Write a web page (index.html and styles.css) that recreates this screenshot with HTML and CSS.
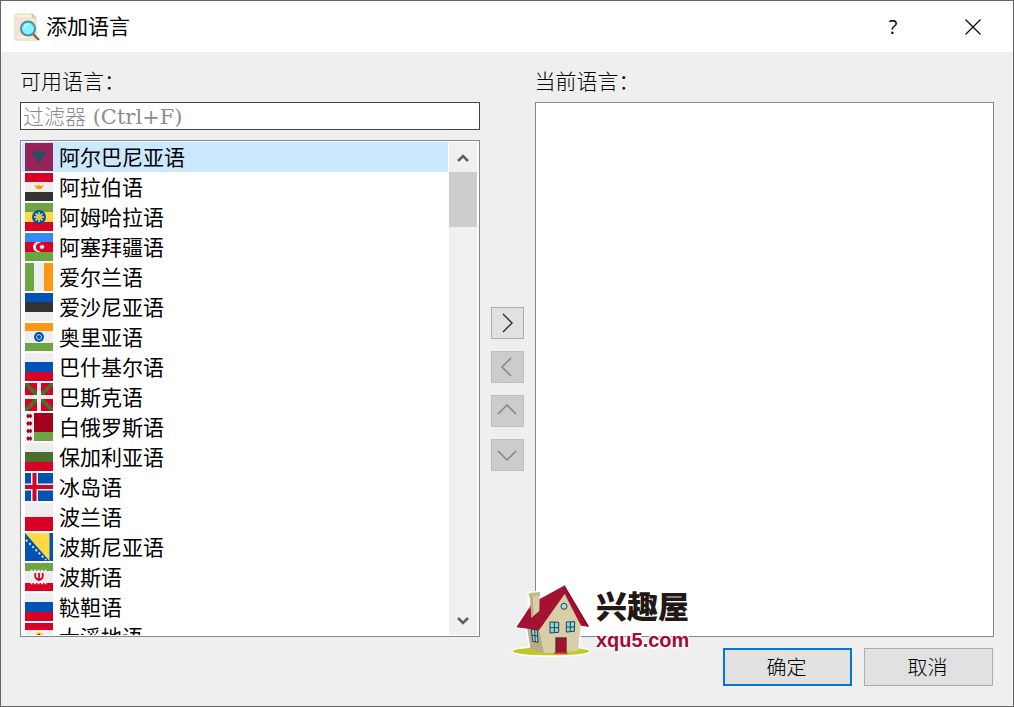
FILE: index.html
```html
<!DOCTYPE html>
<html lang="zh-CN">
<head>
    <meta charset="UTF-8">
    <meta name="viewport" content="width=device-width, initial-scale=1.0">
    <title>添加语言</title>
    <link rel="stylesheet" href="styles.css">
</head>
<body>
    <div class="dialog" role="dialog" aria-labelledby="dialog-title">
        <header class="titlebar">
            <svg class="app-icon" viewBox="0 0 26 28" aria-hidden="true">
                <path d="M3 0H18L23 5V26Q23 28 21 28H2Q0 28 0 26V3Q0 0 3 0Z" fill="#f0e4d3"/>
                <path d="M3 3H16M3 24H15" stroke="#f8f1e7" stroke-width="2"/>
                <path d="M18 0V5H23Z" fill="#d9c9b4"/>
                <path d="M18.500 20.500L25 27" stroke="#9a5c2c" stroke-width="2.400"/>
                <circle cx="14" cy="15.500" r="7" fill="#7ef4fb" stroke="#4d8ea6" stroke-width="2"/>
                <path d="M10 15Q11 11.500 14.500 11.500" stroke="#c4ffff" stroke-width="1.500" fill="none"/>
            </svg>
            <h1 class="title" id="dialog-title">添加语言</h1>
            <button class="caption-button" type="button" aria-label="帮助">?</button>
            <button class="caption-button" type="button" aria-label="关闭">
                <svg class="close-icon" viewBox="0 0 16 16" aria-hidden="true"><path d="M.5 .5L15.500 15.500M15.500 .5L.5 15.500"/></svg>
            </button>
        </header>

        <main class="content">
            <label class="label label-available" for="filter">可用语言：</label>
            <input class="filter" id="filter" type="text" placeholder="过滤器 (Ctrl+F)">

            <div class="available">
                <ul class="languages" role="listbox" aria-label="可用语言">
                    <li class="language selected" role="option" aria-selected="true">
                        <svg class="flag" viewBox="0 0 28 28"><path fill="#96245b" d="M0 0h28v28H0z"/><path fill="#2d4a63" d="M14 9l-1-2-2 1 1 2-5-2 1 4 2 3 2 0-1 2 1 2 1-1 1 4 1-4 1 1 1-2-1-2 2 0 2-3 1-4-5 2 1-2-2-1z"/></svg>
                        <span class="name">阿尔巴尼亚语</span>
                    </li>
                    <li class="language" role="option">
                        <svg class="flag" viewBox="0 0 28 28"><path fill="#eee" d="M0 0h28v28H0z"/><path fill="#d80027" d="M0 0h28v9H0z"/><path fill="#333" d="M0 19h28v9H0z"/><path fill="#ff9811" d="M9 12l4 1 1-2 1 2 4-1-2 3h-1l1 1h-6l1-1h-1z"/></svg>
                        <span class="name">阿拉伯语</span>
                    </li>
                    <li class="language" role="option">
                        <svg class="flag" viewBox="0 0 28 28"><path fill="#ffda44" d="M0 0h28v28H0z"/><path fill="#6da544" d="M0 0h28v9H0z"/><path fill="#d80027" d="M0 19h28v9H0z"/><circle cx="14" cy="14" r="7" fill="#0052b4"/><path stroke="#ffda44" stroke-width="1.500" d="M14 9v10M9 14h10M10.500 10.500l7 7M17.500 10.500l-7 7"/><circle cx="14" cy="14" r="3" fill="#d4c45a"/></svg>
                        <span class="name">阿姆哈拉语</span>
                    </li>
                    <li class="language" role="option">
                        <svg class="flag" viewBox="0 0 28 28"><path fill="#d80027" d="M0 0h28v28H0z"/><path fill="#338af3" d="M0 0h28v9H0z"/><path fill="#6da544" d="M0 19h28v9H0z"/><circle cx="13" cy="14" r="5" fill="#eee"/><circle cx="15" cy="14" r="4" fill="#d80027"/><path fill="#eee" d="M17 11.500l.7 1.100 1.300-.2-.2 1.100 1 .5-1 .5.2 1.100-1.300-.2-.7 1.100-.7-1.100-1.300.2.2-1.100-1-.5 1-.5-.2-1.100 1.300.2z"/></svg>
                        <span class="name">阿塞拜疆语</span>
                    </li>
                    <li class="language" role="option">
                        <svg class="flag" viewBox="0 0 28 28"><path fill="#eee" d="M0 0h28v28H0z"/><path fill="#6da544" d="M0 0h9v28H0z"/><path fill="#ff9811" d="M19 0h9v28h-9z"/></svg>
                        <span class="name">爱尔兰语</span>
                    </li>
                    <li class="language" role="option">
                        <svg class="flag" viewBox="0 0 28 28"><path fill="#eee" d="M0 0h28v28H0z"/><path fill="#0052b4" d="M0 0h28v9H0z"/><path fill="#333" d="M0 9h28v10H0z"/></svg>
                        <span class="name">爱沙尼亚语</span>
                    </li>
                    <li class="language" role="option">
                        <svg class="flag" viewBox="0 0 28 28"><path fill="#eee" d="M0 0h28v28H0z"/><path fill="#ff9811" d="M0 0h28v8H0z"/><path fill="#6da544" d="M0 20h28v8H0z"/><circle cx="14" cy="14" r="5" fill="#0052b4"/><circle cx="14" cy="14" r="2.500" fill="none" stroke="#b8cce8"/></svg>
                        <span class="name">奥里亚语</span>
                    </li>
                    <li class="language" role="option">
                        <svg class="flag" viewBox="0 0 28 28"><path fill="#eee" d="M0 0h28v28H0z"/><path fill="#0052b4" d="M0 9h28v10H0z"/><path fill="#d80027" d="M0 19h28v9H0z"/></svg>
                        <span class="name">巴什基尔语</span>
                    </li>
                    <li class="language" role="option">
                        <svg class="flag" viewBox="0 0 28 28"><path fill="#d80027" d="M0 0h28v28H0z"/><path stroke="#496e2d" stroke-width="4" d="M0 0l28 28M28 0L0 28"/><path stroke="#eee" stroke-width="4" d="M14 0v28M0 14h28"/></svg>
                        <span class="name">巴斯克语</span>
                    </li>
                    <li class="language" role="option">
                        <svg class="flag" viewBox="0 0 28 28"><path fill="#eee" d="M0 0h28v28H0z"/><path fill="#a2001d" d="M9 0h19v19H9z"/><path fill="#6da544" d="M9 19h19v9H9z"/><path fill="#a2001d" d="M3 .5l1.300 1.500L5.600.5l1.700 2.500-1.700 2.500-1.300-1.500L3 5.500 1.300 3zM3 8l1.300 1.500L5.600 8l1.700 2.500L5.600 13l-1.300-1.500L3 13l-1.700-2.500zM3 15.500L4.300 17l1.300-1.500L7.300 18l-1.700 2.500L4.300 19 3 20.500 1.300 18zM3 23l1.300 1.500L5.600 23l1.700 2.500L5.600 28l-1.300-1.500L3 28l-1.700-2.500z"/></svg>
                        <span class="name">白俄罗斯语</span>
                    </li>
                    <li class="language" role="option">
                        <svg class="flag" viewBox="0 0 28 28"><path fill="#eee" d="M0 0h28v28H0z"/><path fill="#496e2d" d="M0 9h28v10H0z"/><path fill="#d80027" d="M0 19h28v9H0z"/></svg>
                        <span class="name">保加利亚语</span>
                    </li>
                    <li class="language" role="option">
                        <svg class="flag" viewBox="0 0 28 28"><path fill="#0052b4" d="M0 0h28v28H0z"/><path stroke="#eee" stroke-width="7" d="M9.500 0v28M0 14h28"/><path stroke="#d80027" stroke-width="4" d="M9.500 0v28M0 14h28"/></svg>
                        <span class="name">冰岛语</span>
                    </li>
                    <li class="language" role="option">
                        <svg class="flag" viewBox="0 0 28 28"><path fill="#eee" d="M0 0h28v28H0z"/><path fill="#d80027" d="M0 14h28v14H0z"/></svg>
                        <span class="name">波兰语</span>
                    </li>
                    <li class="language" role="option">
                        <svg class="flag" viewBox="0 0 28 28"><path fill="#0052b4" d="M0 0h28v28H0z"/><path fill="#ffda44" d="M0 0h24.500v28z"/><path fill="#0052b4" d="M0 3l24 24.500V28H0z"/><path stroke="#eee" stroke-width="2" stroke-dasharray="2 2.500" d="M1 7l20 20"/></svg>
                        <span class="name">波斯尼亚语</span>
                    </li>
                    <li class="language" role="option">
                        <svg class="flag" viewBox="0 0 28 28"><path fill="#eee" d="M0 0h28v28H0z"/><path fill="#6da544" d="M0 0h28v8H0z"/><path fill="#d80027" d="M0 20h28v8H0z"/><path stroke="#eee" stroke-width="1.500" stroke-dasharray="2 1.500" d="M5.500 7.500h17.500M5.500 20.500h17.500"/><path fill="none" stroke="#d80027" stroke-width="1.800" d="M10.500 10q-1.500 6 3.500 7 5-1 3.500-7M14 10v8"/></svg>
                        <span class="name">波斯语</span>
                    </li>
                    <li class="language" role="option">
                        <svg class="flag" viewBox="0 0 28 28"><path fill="#eee" d="M0 0h28v28H0z"/><path fill="#0052b4" d="M0 9h28v10H0z"/><path fill="#d80027" d="M0 19h28v9H0z"/></svg>
                        <span class="name">鞑靼语</span>
                    </li>
                    <li class="language" role="option">
                        <svg class="flag" viewBox="0 0 28 28"><path fill="#eee" d="M0 0h28v28H0z"/><path fill="#d80027" d="M0 0h28v7H0zM0 21h28v7H0z"/><circle cx="14" cy="14" r="5" fill="#ffda44"/><circle cx="14" cy="12" r="1.500" fill="#d80027"/></svg>
                        <span class="name">大溪地语</span>
                    </li>
                </ul>
                <div class="scrollbar">
                    <button class="scroll-button" type="button" aria-label="向上滚动">
                        <svg class="scroll-arrow" viewBox="0 0 12 8"><path d="M1 7l5-5 5 5"/></svg>
                    </button>
                    <div class="scroll-track"><div class="scroll-thumb"></div></div>
                    <button class="scroll-button" type="button" aria-label="向下滚动">
                        <svg class="scroll-arrow" viewBox="0 0 12 8"><path d="M1 1l5 5 5-5"/></svg>
                    </button>
                </div>
            </div>

            <div class="move-buttons">
                <button class="move-button" type="button" aria-label="添加">
                    <svg class="move-icon" viewBox="0 0 20 20"><path d="M6 1l9 9-9 9"/></svg>
                </button>
                <button class="move-button" type="button" aria-label="移除" disabled>
                    <svg class="move-icon" viewBox="0 0 20 20"><path d="M14 1l-9 9 9 9"/></svg>
                </button>
                <button class="move-button" type="button" aria-label="上移" disabled>
                    <svg class="move-icon" viewBox="0 0 20 20"><path d="M1 13l9-9 9 9"/></svg>
                </button>
                <button class="move-button" type="button" aria-label="下移" disabled>
                    <svg class="move-icon" viewBox="0 0 20 20"><path d="M1 6l9 9 9-9"/></svg>
                </button>
            </div>

            <div class="label label-current" id="current-label">当前语言：</div>
            <ul class="current" role="listbox" aria-labelledby="current-label"></ul>
        </main>

        <footer class="actions">
            <button class="button primary" type="submit">确定</button>
            <button class="button" type="button">取消</button>
        </footer>

        <div class="watermark">
            <svg class="house" viewBox="36 36 240 222" aria-hidden="true">
                <ellipse cx="156" cy="241" rx="116" ry="13" fill="#fff" stroke="#fff" stroke-width="8"/>
                <path d="M195 44L268 166 245 163 236 238 133 247 95 235 84 171 52 168 91 111V66L122 64V77Z" fill="#fff" stroke="#fff" stroke-width="10" stroke-linejoin="round"/>
                <ellipse cx="156" cy="241" rx="115" ry="12" fill="#bfc82a"/>
                <path d="M84 168L122 165 135 246 95 235Z" fill="#b8ad86"/>
                <path d="M194 66L246 155 237 240 135 246 118 165Z" fill="#d8ceaa"/>
                <path d="M195 44L268 167 246 164 197 69 120 178 52 169 100 96Z" fill="#a51231"/>
                <path d="M195 44L268 167" stroke="#7c0b22" stroke-width="4" fill="none"/>
                <path d="M93 72L122 69 121 120 97 140Z" fill="#d8ceaa"/>
                <path d="M93 72L101 72 104 134 97 140Z" fill="#b8ad86"/>
                <path d="M90 66L123 63V74L90 78Z" fill="#c5b98f"/>
                <circle cx="195" cy="106" r="9" fill="#8fe4ee" stroke="#343c42" stroke-width="3"/>
                <path d="M153 153L179 154V184L153 186ZM202 153L227 152 226 181 202 183ZM97 175L115 177 117 214 101 211Z" fill="#7eddeb" stroke="#343c42" stroke-width="3"/>
                <path d="M166 153V185M153 170H179M214 153V182M202 168H227M107 177L109 213M98 193L116 195" stroke="#343c42" stroke-width="3"/>
                <path d="M169 199H203V246H169Z" fill="#4a3224"/>
                <path d="M174 202H201V245H174Z" fill="#a51231"/>
                <path d="M166 244H205V249H166Z" fill="#d43a3f"/>
            </svg>
            <div class="brand">
                <span class="brand-name">兴趣屋</span>
                <span class="brand-site">xqu5.com</span>
            </div>
        </div>
    </div>
</body>
</html>
```
FILE: styles.css
```css
* {
    box-sizing: border-box;
}

body {
    margin: 0;
    font-family: "Liberation Sans", "Noto Sans CJK SC", sans-serif;
    font-size: 21px;
    color: #000;
}

button,
input {
    font: inherit;
    color: inherit;
    border-radius: 0;
}

ul {
    margin: 0;
    padding: 0;
    list-style: none;
}

svg {
    display: block;
    flex: none;
}

.dialog {
    position: relative;
    display: flex;
    flex-direction: column;
    height: 100vh;
    background: #efefef;
    border: 1px solid #666;
}

/* Title bar */

.titlebar {
    display: flex;
    align-items: center;
    height: 51px;
    padding-left: 13px;
    background: #fff;
}

.app-icon {
    width: 26px;
    height: 28px;
}

.title {
    flex: 1;
    margin: 0 0 0 6px;
    padding-bottom: 4px;
    font-size: 21px;
    font-weight: 400;
}

.caption-button {
    display: flex;
    align-items: center;
    justify-content: center;
    width: 80px;
    height: 51px;
    padding: 0;
    border: 0;
    background: none;
    font-family: "Open Sans", sans-serif;
    font-size: 20px;
}

.close-icon {
    width: 16px;
    height: 16px;
    stroke: #000;
    stroke-width: 1.2;
}

/* Lists */

.content {
    flex: 1;
    display: grid;
    grid-template-columns: 1fr 33px 1fr;
    grid-template-rows: 22px 28px 1fr;
    gap: 10px 11px;
    min-height: 0;
    padding: 18px 19px 0;
}

.label {
    font-weight: 300;
    line-height: 24px;
}

.label-available,
.filter,
.available {
    grid-column: 1;
}

.label-current {
    grid-column: 3;
    grid-row: 1;
}

.filter {
    width: 100%;
    padding: 2px 2px 0;
    border: 1px solid #444;
    background: #fff;
    font-family: "DejaVu Serif", "Noto Sans CJK SC", serif;
    font-weight: 300;
    outline: none;
}

.filter::placeholder {
    color: #8c8c8c;
    opacity: 1;
}

.available {
    grid-row: 3;
    display: flex;
    gap: 1px;
    min-height: 0;
    padding: 1px 2px 1px 1px;
    border: 1px solid #828790;
    background: #fff;
}

.languages {
    flex: 1;
    overflow: hidden;
}

.language {
    display: flex;
    align-items: center;
    gap: 6px;
    height: 30px;
    padding-left: 3px;
    white-space: nowrap;
}

.language.selected {
    background: #cce8ff;
}

.name {
    padding-top: 2px;
    line-height: 28px;
}

.flag {
    width: 28px;
    height: 28px;
}

.scrollbar {
    display: flex;
    flex-direction: column;
    width: 28px;
    background: #f0f0f0;
}

.scroll-button {
    display: flex;
    align-items: center;
    justify-content: center;
    height: 30px;
    padding: 2px 0 0;
    border: 0;
    background: none;
}

.scroll-arrow {
    width: 12px;
    height: 8px;
    fill: none;
    stroke: #606060;
    stroke-width: 2.5;
}

.scroll-track {
    flex: 1;
}

.scroll-thumb {
    height: 55px;
    background: #cdcdcd;
}

.move-buttons {
    grid-column: 2;
    grid-row: 3;
    align-self: center;
    display: grid;
    gap: 12px;
}

.move-button {
    display: flex;
    align-items: center;
    justify-content: center;
    height: 32px;
    padding: 0;
    border: 1px solid #adadad;
    background: #e1e1e1;
}

.move-button:disabled {
    border-color: #bfbfbf;
    background: #ccc;
}

.move-icon {
    width: 20px;
    height: 20px;
    fill: none;
    stroke: #333;
    stroke-width: 1.5;
}

.move-button:disabled .move-icon {
    stroke: #838383;
}

.current {
    grid-column: 3;
    grid-row: 2 / 4;
    border: 1px solid #828790;
    background: #fff;
}

/* Bottom buttons */

.actions {
    display: flex;
    justify-content: flex-end;
    gap: 12px;
    padding: 11px 20px 20px;
}

.button {
    width: 129px;
    height: 38px;
    padding: 0 2px 2px 0;
    border: 1px solid #adadad;
    background: #e1e1e1;
    font-size: 20px;
    font-weight: 300;
}

.button.primary {
    border: 2px solid #0078d7;
}

/* Site mark over the right list */

.watermark {
    position: absolute;
    left: calc(50% + 4px);
    bottom: 49px;
    display: flex;
    align-items: center;
    gap: 5px;
}

.house {
    width: 80px;
    height: 74px;
}

.brand {
    display: flex;
    flex-direction: column;
    padding-top: 6px;
    color: #231815;
    text-shadow: 1px 1px 0 #fff, -1px -1px 0 #fff, 1px -1px 0 #fff, -1px 1px 0 #fff, 0 2px 1px #fff, 0 -2px 1px #fff;
}

.brand-name {
    font-size: 31px;
    font-weight: 900;
    line-height: 34px;
}

.brand-site {
    color: #a40b31;
    font-size: 20px;
    font-weight: 700;
    line-height: 30px;
}
```
